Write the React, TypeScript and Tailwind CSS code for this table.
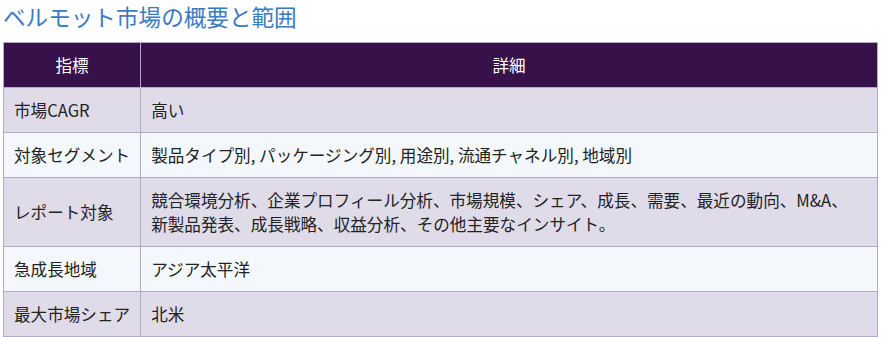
const rows: [string, React.ReactNode][] = [
  ['市場CAGR', '高い'],
  ['対象セグメント', '製品タイプ別, パッケージング別, 用途別, 流通チャネル別, 地域別'],
  [
    'レポート対象',
    <>
      競合環境分析、企業プロフィール分析、市場規模、シェア、成長、需要、最近の動向、M&A、
      <br />
      新製品発表、成長戦略、収益分析、その他主要なインサイト。
    </>,
  ],
  ['急成長地域', 'アジア太平洋'],
  ['最大市場シェア', '北米'],
]

export default function App() {
  return (
    <div
      className="bg-white px-[3px] pt-[2px] text-[#222]"
      style={{ fontFamily: '"Noto Sans CJK JP", "Noto Sans", sans-serif' }}
    >
      <h2 className="text-[22.6px] leading-[30px] font-normal text-[#3b7bbf]">
        ベルモット市場の概要と範囲
      </h2>
      <table className="mt-[10px] w-[875px] border-collapse text-[16.6px] leading-6">
        <thead>
          <tr className="bg-[#36114a] text-white">
            <th className="w-[137px] border border-[#b4a9c8] py-[10px] font-normal">指標</th>
            <th className="border border-[#b4a9c8] py-[10px] font-normal">詳細</th>
          </tr>
        </thead>
        <tbody>
          {rows.map(([k, v], i) => (
            <tr key={k} className={i % 2 === 0 ? 'bg-[#dfdbe9]' : 'bg-[#f4f8fc]'}>
              <td className="border border-[#b4a9c8] px-[10px] py-[10px] whitespace-nowrap">{k}</td>
              <td className="border border-[#b4a9c8] px-[10px] py-[10px]">{v}</td>
            </tr>
          ))}
        </tbody>
      </table>
    </div>
  )
}
